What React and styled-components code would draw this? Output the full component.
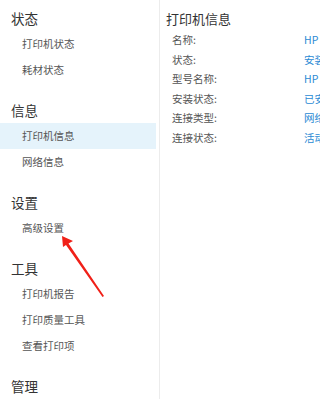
import React from "react";
import styled, { createGlobalStyle } from "styled-components";

const GlobalStyle = createGlobalStyle`
  html, body {
    margin: 0;
    padding: 0;
    background: #fff;
    overflow: hidden;
  }
  body {
    font-family: "Noto Sans CJK SC", "Noto Sans", sans-serif;
  }
`;

const sections = [
  { title: "状态", items: ["打印机状态", "耗材状态"] },
  { title: "信息", items: ["打印机信息", "网络信息"] },
  { title: "设置", items: ["高级设置"] },
  { title: "工具", items: ["打印机报告", "打印质量工具", "查看打印项"] },
  { title: "管理", items: [] },
];

const info = [
  ["名称:", "HP Smart Tank 510 series"],
  ["状态:", "安装完成"],
  ["型号名称:", "HP Smart Tank 510 series"],
  ["安装状态:", "已安装"],
  ["连接类型:", "网络"],
  ["连接状态:", "活动"],
];

const Page = styled.div`
  position: relative;
  display: flex;
  width: 320px;
  height: 399px;
  overflow: hidden;
`;

const Sidebar = styled.nav`
  width: 159px;
  flex-shrink: 0;
  padding-top: 5px;
  display: flex;
  flex-direction: column;
  gap: 14px;
  border-right: 1px solid #ececec;
`;

const Section = styled.div`
  display: flex;
  flex-direction: column;
`;

const SectionTitle = styled.div`
  height: 26px;
  line-height: 26px;
  padding-left: 11px;
  font-size: 13.5px;
  color: #333;
`;

const NavItem = styled.div`
  height: 26px;
  line-height: 26px;
  margin-right: 3px;
  padding-left: 22px;
  font-size: 10.5px;
  color: #555;
  background: ${(p) => (p.$active ? "#e5f3fb" : "transparent")};
`;

const Content = styled.main`
  flex: 1;
  padding: 8px 0 0 6px;
  white-space: nowrap;
`;

const ContentTitle = styled.div`
  font-size: 13px;
  color: #333;
  height: 22px;
  line-height: 22px;
`;

const InfoRow = styled.div`
  display: grid;
  grid-template-columns: 132px auto;
  height: 19.6px;
  line-height: 19.6px;
  padding-left: 6px;
  font-size: 10.5px;
`;

const Label = styled.span`
  color: #555;
`;

const Value = styled.span`
  color: #2a8ad4;
`;

const Arrow = styled.svg`
  position: absolute;
  left: 0;
  top: 0;
  pointer-events: none;
`;

export default function App() {
  return (
    <>
      <GlobalStyle />
      <Page>
        <Sidebar>
          {sections.map((s) => (
            <Section key={s.title}>
              <SectionTitle>{s.title}</SectionTitle>
              {s.items.map((it) => (
                <NavItem key={it} $active={it === "打印机信息"}>
                  {it}
                </NavItem>
              ))}
            </Section>
          ))}
        </Sidebar>
        <Content>
          <ContentTitle>打印机信息</ContentTitle>
          {info.map(([k, v]) => (
            <InfoRow key={k}>
              <Label>{k}</Label>
              <Value>{v}</Value>
            </InfoRow>
          ))}
        </Content>
        <Arrow width="320" height="399" viewBox="0 0 320 399">
          <polygon points="62,236 73,241 68.5,243.5 104,296 102.5,297 66,245 63,247" fill="#f02018" />
        </Arrow>
      </Page>
    </>
  );
}
